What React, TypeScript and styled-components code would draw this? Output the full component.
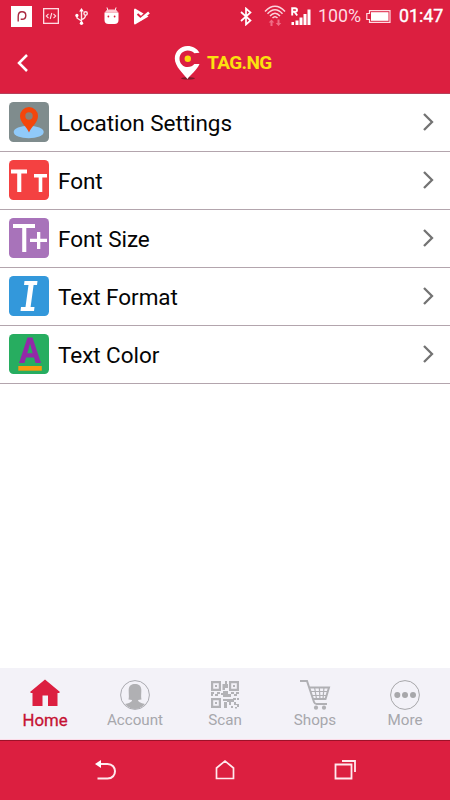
import React from 'react';
import styled, { createGlobalStyle } from 'styled-components';

const red = '#dc1f40';

const GlobalStyle = createGlobalStyle`
  * { box-sizing: border-box; }
  body { margin: 0; background: #fff; font-family: Roboto, sans-serif; }
  svg { display: block; flex: none; }
`;

const Screen = styled.div`
  width: 450px;
  height: 800px;
  display: flex;
  flex-direction: column;
  overflow: hidden;
`;

const StatusBar = styled.div`
  height: 32px;
  background: ${red};
  display: flex;
  align-items: center;
  color: #fff;
`;

const Slot = styled.div<{ $gap: number; $width: number }>`
  margin-left: ${p => p.$gap}px;
  width: ${p => p.$width}px;
  flex: none;
  white-space: nowrap;
`;

const StatusText = styled(Slot)<{ $stroke: number; $color: string }>`
  font-size: 17.800px;
  color: ${p => p.$color};
  -webkit-text-stroke: ${p => p.$stroke}px ${p => p.$color};
  line-height: 32px;
`;

const Header = styled.header`
  height: 62px;
  background: ${red};
  border-bottom: 1px solid #b5405a;
  display: grid;
  grid-template-columns: 60px 1fr 62px;
  align-items: center;
`;

const BackButton = styled.div`
  padding-left: 17px;
`;

const Brand = styled.div`
  display: flex;
  align-items: center;
  padding-left: 114px;
`;

const BrandName = styled.span`
  margin-left: 7px;
  font-size: 19px;
  font-weight: 700;
  letter-spacing: -0.600px;
  color: #fbe10f;
  white-space: nowrap;
`;

const List = styled.main`
  flex: 1;
  background: #fff;
`;

const Row = styled.div`
  height: 58px;
  display: flex;
  align-items: center;
  border-bottom: 1px solid #b3a5ad;
  padding: 0 15px 1px 9px;
`;

const RowLabel = styled.span`
  flex: 1;
  margin-left: 9px;
  padding-top: 1px;
  font-size: 22.500px;
  letter-spacing: -0.050px;
  color: #050505;
`;

const TabBar = styled.nav`
  height: 72px;
  background: #f3f2f8;
  border-bottom: 1px solid #fbdce8;
  display: grid;
  grid-template-columns: repeat(5, 1fr);
`;

const Tab = styled.div<{ $active?: boolean }>`
  display: flex;
  flex-direction: column;
  align-items: center;
  padding-top: 11px;
  color: ${p => (p.$active ? '#c51233' : '#a7a7ac')};
  font-size: ${p => (p.$active ? 16.8 : 15.200)}px;
  -webkit-text-stroke: ${p => (p.$active ? 0.300 : 0)}px currentColor;
  line-height: 18px;
`;

const TabLabel = styled.span`
  margin-top: 1px;
`;

const SystemNav = styled.div`
  height: 60px;
  background: ${red};
  border-top: 1px solid #9c1229;
  display: flex;
  justify-content: center;
  align-items: center;
  gap: 96px;
  padding-bottom: 1px;
`;

const PIcon = () => (
  <svg width="21" height="21" viewBox="0 0 21 21">
    <rect width="21" height="21" fill="#fff" />
    <path d="M7.200 15.500V10.500C7.200 7.200 8.800 5.800 11 5.800C13.300 5.800 14.800 7.400 14.800 9.500C14.800 11.800 13.200 13.300 11 13.300H9.700" fill="none" stroke="#a9283f" strokeWidth="1.400" />
  </svg>
);
const CodeIcon = () => (
  <svg width="16" height="16" viewBox="0 0 16 16" fill="none" stroke="#ffdce3" strokeWidth="1.300">
    <rect x=".65" y=".65" width="14.700" height="14.700" />
    <path d="M5.500 5.800L3.300 8L5.500 10.200M10.500 5.800L12.700 8L10.500 10.200M8.800 5L7.200 11" strokeWidth="1.100" />
  </svg>
);
const UsbIcon = () => (
  <svg width="13" height="17" viewBox="0 0 13 17" fill="none" stroke="#ffe6eb" strokeWidth="1.400">
    <path d="M6.500 2V15M6.500 13L2 10V7.500M6.500 11.500C8.500 11 10.500 10 10.500 7" />
    <path d="M6.500 0L8.800 3.500H4.200Z" fill="#fff" stroke="none" />
    <circle cx="6.500" cy="15.200" r="1.700" fill="#fff" stroke="none" />
    <circle cx="1.900" cy="7.400" r="1.600" fill="#fff" stroke="none" />
    <circle cx="10.600" cy="5.500" r="1.700" />
  </svg>
);
const DroidIcon = () => (
  <svg width="15" height="18" viewBox="0 0 15 18">
    <path d="M3.800 3.500L3 .5M11.200 3.500L12 .5" stroke="#fff" strokeWidth="1" />
    <path d="M1 5.500Q2 2.500 5 2.500H10Q13 2.500 14 5.500Z" fill="#ffc6d0" />
    <path d="M.5 5.500H14.500V13Q14.500 17 10.500 17H4.500Q.5 17 .5 13Z" fill="#fff" />
    <circle cx="4.400" cy="9.500" r=".9" fill={red} /><circle cx="10.600" cy="9.500" r=".9" fill={red} />
  </svg>
);
const PlayCheckIcon = () => (
  <svg width="16" height="17" viewBox="0 0 16 17">
    <path d="M1 .5L14.500 8.500L1 16.500Q0 16.500 0 15V2Q0 .5 1 .5Z" fill="#fff" />
    <path d="M3.500 6L7 9.200L12 4.500" fill="none" stroke={red} strokeWidth="2" />
    <path d="M6.500 11.500L15 4.500" fill="none" stroke="#fff" strokeWidth="2.600" />
  </svg>
);
const BluetoothIcon = () => (
  <svg width="12" height="19" viewBox="0 0 12 19" fill="none" stroke="#fff" strokeWidth="1.700">
    <path d="M1 5L10.500 13.500L6 17.500V1.500L10.500 5.500L1 14" />
  </svg>
);
const WifiIcon = () => (
  <svg width="22" height="22" viewBox="0 0 22 22" fill="none" stroke="#fbd3dc" strokeWidth="1.500">
    <path d="M1 6.500Q11 -4 21 6.500M3.500 8.700Q11 .7 18.500 8.700M6 11Q11 5.500 16 11M8.500 13Q11 10.500 13.500 13" />
    <path d="M7.500 14.500L10.300 17.500H8.500V21H6.500V17.500H4.700ZM14.500 21L17.300 18H15.500V14.500H13.500V18H11.700Z" fill="#f06c84" stroke="none" />
  </svg>
);
const SignalIcon = () => (
  <svg width="20" height="19" viewBox="0 0 20 19">
    <path d="M1.200 8.500V1.200H4Q6 1.200 6 3T4 4.800H1.500M3.600 5L6.200 8.500" fill="none" stroke="#fff" strokeWidth="1.900" />
    <path d="M.5 15H3V18H.5ZM4.500 13.500H7.500V18H4.500ZM8.500 10.500H11.500V18H8.500ZM12.500 7H15.500V18H12.500ZM16.500 2.500H19.500V18H16.500Z" fill="#fff" />
  </svg>
);
const BatteryIcon = () => (
  <svg width="25" height="13" viewBox="0 0 25 13">
    <path d="M3.500 .7H24V12.300H3.500V9.500H.8V3.500H3.500Z" fill="none" stroke="#ffdce3" strokeWidth="1.200" />
    <rect x="5" y="2.200" width="17.500" height="8.600" fill="#fff" />
  </svg>
);
const LogoPin = () => (
  <svg width="26" height="36" viewBox="0 0 26 36">
    <ellipse cx="14" cy="33.300" rx="7" ry="1.300" fill="#7e1b2b" />
    <path d="M25.500 7.700C23 3.200 18.500 .9 13.500 .9C6.300 .9 .8 6.500 .8 13.400C.8 21.500 9.500 28.500 13.500 34C16.500 29.500 23 25.300 25.500 19H20.300C18.900 21 16.500 22 13.700 22C9 22 5.500 18.300 5.500 13.700S9.100 5.500 13.700 5.500C16.500 5.500 18.800 6.400 20.300 8.300Z" fill="#fff" />
    <circle cx="13.800" cy="13.700" r="3.200" fill="#fbd90f" />
  </svg>
);

const Tile = ({ fill, children }: { fill: string; children: React.ReactNode }) => (
  <svg width="40" height="40" viewBox="0 0 40 40">
    <rect width="40" height="40" rx="4.500" fill={fill} />
    {children}
  </svg>
);

const rows = [
  { label: 'Location Settings', icon: (
    <Tile fill="#7f8c8d">
      <ellipse cx="19.700" cy="30" rx="15" ry="6.200" fill="#90caf9" />
      <path d="M20 30.500C17.500 24.500 11 20.500 11 14A9 9 0 0 1 29 14C29 20.500 22.500 24.500 20 30.500Z" fill="#f4460b" />
      <circle cx="20" cy="14" r="3.700" fill="#8b8176" />
    </Tile>
  ) },
  { label: 'Font', icon: (
    <Tile fill="#f44141">
      <path d="M2 9.500H18V13.500H12.300V32H8.200V13.500H2ZM25 14H38V17.500H33.300V32H29.700V17.500H25Z" fill="#fff" />
    </Tile>
  ) },
  { label: 'Font Size', icon: (
    <Tile fill="#a873ba">
      <path d="M4 6H26V10H17.300V34H13.200V10H4ZM28 14H31.300V20.800H38V24H31.300V31H28V24H21V20.800H28Z" fill="#fff" />
    </Tile>
  ) },
  { label: 'Text Format', icon: (
    <Tile fill="#3398db">
      <path d="M15.500 5H28.500L28 9H24.600L21.600 31H25.500L25 35H11.500L12 31H16.500L19.500 9H15Z" fill="#fff" />
    </Tile>
  ) },
  { label: 'Text Color', icon: (
    <Tile fill="#27ad60">
      <path fillRule="evenodd" d="M18.500 3.500H23.500L32 29H26.500L25 23.500H17L15.500 29H10ZM21 9.500L18.300 19.200H23.700Z" fill="#9229a8" />
      <rect x="9.300" y="32" width="23.500" height="4.700" fill="#f89c0e" />
    </Tile>
  ) },
];

const RowChevron = () => (
  <svg width="14" height="20" viewBox="0 0 14 20"><path d="M3 2L11 10L3 18" fill="none" stroke="#737373" strokeWidth="2.300" /></svg>
);

const HomeTabIcon = () => (
  <svg width="30" height="31" viewBox="0 0 30 31">
    <path d="M15 .5L30 13L29 14H27.500V27H18V16.500H12.500V27H2.500V14H1L0 13Z" fill="#dc1f40" />
  </svg>
);
const AccountIcon = () => (
  <svg width="30" height="31" viewBox="0 0 30 31">
    <circle cx="15" cy="16" r="14.400" fill="none" stroke="#aaaab0" strokeWidth="1" />
    <path d="M8.500 20.500C9.300 17 8.500 14 8.700 10.500C9 6.500 11.500 5 15 5S21 6.500 21.300 10.500C21.500 14 20.700 17 21.500 20.500L18 21Q18 23.500 25 25C19 31.800 11 31.800 5 25C12 23.500 12 22 12 21Z" fill="#b0b0b3" />
  </svg>
);
const QrIcon = () => (
  <svg width="28" height="31" viewBox="0 0 28 31" fill="#b2b2b6">
    <path fillRule="evenodd" d="M0 2H10V12H0ZM2.200 4.200V9.800H7.800V4.200ZM18 2H28V12H18ZM20.200 4.200V9.800H25.800V4.200ZM0 19H10V29H0ZM2.200 21.200V26.800H7.800V21.200Z" />
    <path d="M4 6H6V8H4ZM22 6H24V8H22ZM4 23H6V25H4Z" />
    <path d="M14 2H16V5H17V9H14V11H11.500V5H14ZM12 12H17V15H20V13H23V15H25V13H28V15H26V17H23V15H20V18H12V16H10V14H12ZM0 13H3V15H6V13H9V15H7V17H4V15H2V17H0ZM12 20H17V22H12ZM13 23H16V20H22V19H25V21H23V23H20V26H18V23H16V29H13ZM23 23H25V25H28V28H26V26H23ZM20 27H22V29H20ZM24 28H26V29.500H24ZM26 19H28V21H26Z" />
  </svg>
);
const CartIcon = () => (
  <svg width="31" height="31" viewBox="0 0 31 31" fill="none" stroke="#b0b0b4" strokeWidth="2">
    <path d="M0 2H7L14 23Q14.700 25 16.500 25H27M9 8.500H29L25.500 20H13" />
    <path d="M11 12.500H28M12 16.500H27M14.500 8L16.500 20M19.300 8L20 20M24 8L23 20" strokeWidth="1.200" />
    <circle cx="16" cy="28.700" r="2.100" fill="#b0b0b4" stroke="none" /><circle cx="24" cy="28.700" r="2.100" fill="#b0b0b4" stroke="none" />
  </svg>
);
const MoreIcon = () => (
  <svg width="30" height="31" viewBox="0 0 30 31" fill="#a7a7aa">
    <circle cx="15" cy="16" r="14.400" fill="none" stroke="#a7a7aa" strokeWidth="1" />
    <circle cx="7.300" cy="16" r="3" /><circle cx="15" cy="16" r="3" /><circle cx="23" cy="16" r="3" />
  </svg>
);

const tabs = [
  { label: 'Home', icon: <HomeTabIcon />, active: true },
  { label: 'Account', icon: <AccountIcon /> },
  { label: 'Scan', icon: <QrIcon /> },
  { label: 'Shops', icon: <CartIcon /> },
  { label: 'More', icon: <MoreIcon /> },
];

export default function App() {
  return (
    <Screen>
      <GlobalStyle />
      <StatusBar>
        <Slot $gap={11} $width={21}><PIcon /></Slot>
        <Slot $gap={11} $width={16}><CodeIcon /></Slot>
        <Slot $gap={16} $width={13}><UsbIcon /></Slot>
        <Slot $gap={16} $width={15}><DroidIcon /></Slot>
        <Slot $gap={15} $width={16}><PlayCheckIcon /></Slot>
        <Slot $gap={90} $width={12}><BluetoothIcon /></Slot>
        <Slot $gap={12} $width={22}><WifiIcon /></Slot>
        <Slot $gap={5} $width={20}><SignalIcon /></Slot>
        <StatusText $gap={7} $width={44} $stroke={0} $color="#ffdbe2">100%</StatusText>
        <Slot $gap={4} $width={25}><BatteryIcon /></Slot>
        <StatusText $gap={8} $width={46} $stroke={0.4} $color="#fff">01:47</StatusText>
      </StatusBar>
      <Header>
        <BackButton>
          <svg width="12" height="20" viewBox="0 0 12 20"><path d="M10 2L2 10L10 18" fill="none" stroke="#fff" strokeWidth="2.500" /></svg>
        </BackButton>
        <Brand><LogoPin /><BrandName>TAG.NG</BrandName></Brand>
      </Header>
      <List>
        {rows.map(r => (
          <Row key={r.label}>{r.icon}<RowLabel>{r.label}</RowLabel><RowChevron /></Row>
        ))}
      </List>
      <TabBar>
        {tabs.map(t => (
          <Tab key={t.label} $active={t.active}>{t.icon}<TabLabel>{t.label}</TabLabel></Tab>
        ))}
      </TabBar>
      <SystemNav>
        <svg width="24" height="22" viewBox="0 0 24 22" fill="none" stroke="#ffe9ee" strokeWidth="2">
          <path d="M6 5H14.500C24.500 5 24.500 19.500 14.500 19.500H4.500" /><path d="M2 5L8 1V9Z" fill="#fff" stroke="none" />
        </svg>
        <svg width="24" height="22" viewBox="0 0 24 22" fill="none" stroke="#ffe9ee" strokeWidth="1.700">
          <path d="M3.500 9L12 2L20.500 9V19.500H3.500Z" />
        </svg>
        <svg width="24" height="22" viewBox="0 0 24 22" fill="none" stroke="#ffe9ee" strokeWidth="1.800">
          <path d="M2.500 5.500H18.500V19.500H2.500ZM9 2H22V13" />
        </svg>
      </SystemNav>
    </Screen>
  );
}
